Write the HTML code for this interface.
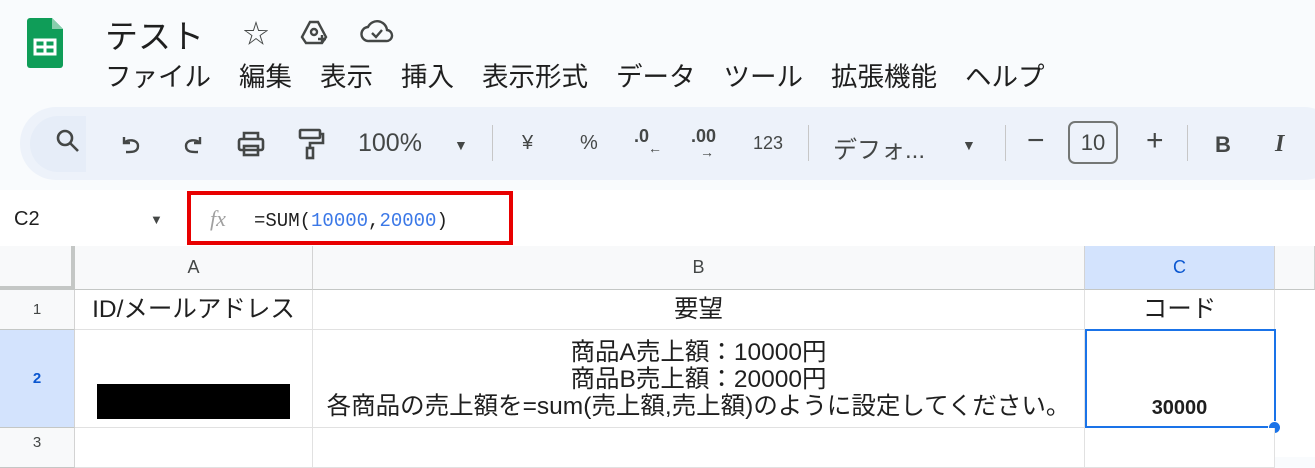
<!DOCTYPE html>
<html><head><meta charset="utf-8"><style>
*{margin:0;padding:0;box-sizing:border-box}
body{width:1315px;height:457px;overflow:hidden;background:#f9fbfd;font-family:"Liberation Sans","Noto Sans CJK JP",sans-serif;color:#444746;position:relative}
.a{position:absolute;white-space:nowrap}
.menu span{margin-right:28px}
.tb{position:absolute;left:20px;top:107px;width:1320px;height:73px;background:#edf2fa;border-radius:36px}
.t{position:absolute;top:128px;font-size:22px;color:#444746}
.sep{position:absolute;top:125px;width:1px;height:36px;background:#c7c7c7}
.grid{position:absolute;left:0;top:246px;width:1315px;height:211px;background:#fff}
.h{position:absolute;background:#f8f9fa;border-right:1px solid #d3d3d3;border-bottom:1px solid #c4c7c5;font-size:18px;color:#444746;display:flex;align-items:center;justify-content:center}
.c{position:absolute;background:#fff;border-right:1px solid #e1e1e1;border-bottom:1px solid #e1e1e1;font-size:24.5px;color:#1f1f1f;text-align:center}
</style></head><body>
<svg class="a" style="left:27px;top:18px" width="36" height="50" viewBox="0 0 36 50"><path d="M3 0h22l11 11v36a3 3 0 0 1-3 3H3a3 3 0 0 1-3-3V3a3 3 0 0 1 3-3z" fill="#0f9d58"/><path d="M25 0v11h11z" fill="#87ceac"/><rect x="8" y="22" width="20" height="14" fill="none" stroke="#fff" stroke-width="3"/><path d="M8 29h20M18 22v14" stroke="#fff" stroke-width="3"/></svg>
<div class="a" style="left:105px;top:10px;font-size:33px;color:#1f1f1f">テスト</div>
<div class="a" style="left:243px;top:14px;font-size:26px">☆</div>
<svg class="a" style="left:298px;top:17px" width="32" height="28" viewBox="0 0 32 28" fill="none" stroke="#444746" stroke-width="2.4"><path d="M4 20L12 5h8l8 15-4 6H8z"/><circle cx="16" cy="15" r="3"/><path d="M24 18v8M20 22h8"/></svg>
<svg class="a" style="left:360px;top:18px" width="34" height="26" viewBox="0 0 34 26" fill="none" stroke="#444746" stroke-width="2.4"><path d="M9 23a7 7 0 0 1-1-14 10 10 0 0 1 19 3 5.5 5.5 0 0 1-1 11z"/><path d="M12 15l4 4 6-7"/></svg>
<div class="a menu" style="left:105px;top:55px;font-size:26.5px;color:#1f1f1f"><span>ファイル</span><span>編集</span><span>表示</span><span>挿入</span><span>表示形式</span><span>データ</span><span>ツール</span><span>拡張機能</span><span>ヘルプ</span></div>
<div class="tb"></div>
<div class="a" style="left:30px;top:116px;width:56px;height:56px;border-radius:28px 0 0 28px;background:#e6edf8"></div>
<svg class="a" style="left:55px;top:128px" width="26" height="26" viewBox="0 0 26 26" fill="none" stroke="#444746" stroke-width="2.6"><circle cx="10" cy="10" r="7"/><path d="M15 15l8 8"/></svg>
<svg class="a" style="left:120px;top:133px" width="24" height="24" viewBox="0 0 24 24" fill="none" stroke="#444746" stroke-width="2.4"><path d="M4 4v6h6"/><path d="M4 10c3-4 14-4 14 3s-8 6-12 6"/></svg>
<svg class="a" style="left:180px;top:133px" width="24" height="24" viewBox="0 0 24 24" fill="none" stroke="#444746" stroke-width="2.4"><path d="M20 4v6h-6"/><path d="M20 10c-3-4-14-4-14 3s8 6 12 6"/></svg>
<svg class="a" style="left:236px;top:130px" width="30" height="28" viewBox="0 0 30 28" fill="none" stroke="#444746" stroke-width="2.6"><path d="M8 9V3h14v6"/><rect x="3" y="9" width="24" height="11" rx="2"/><rect x="8" y="16" width="14" height="9"/></svg>
<svg class="a" style="left:297px;top:128px" width="28" height="32" viewBox="0 0 28 32" fill="none" stroke="#444746" stroke-width="2.6"><rect x="3" y="2" width="20" height="8" rx="1"/><path d="M23 6h3v9H13v5"/><rect x="10" y="20" width="6" height="10"/></svg>
<div class="t" style="left:358px;font-size:25px;top:129px">100%</div>
<div class="t" style="left:454px;font-size:14px;top:137px">▼</div>
<div class="sep" style="left:492px"></div>
<div class="t" style="left:522px;font-size:20px;top:132px">¥</div>
<div class="t" style="left:580px;font-size:20px;top:132px">%</div>
<div class="t" style="left:634px;font-size:18px;top:126px;font-weight:bold">.0</div>
<div class="t" style="left:648px;font-size:14px;top:140px">←</div>
<div class="t" style="left:691px;font-size:18px;top:126px;font-weight:bold">.00</div>
<div class="t" style="left:700px;font-size:14px;top:144px">→</div>
<div class="t" style="left:753px;font-size:18px;top:133px">123</div>
<div class="sep" style="left:808px"></div>
<div class="t" style="left:833px;top:130px;font-size:24px">デフォ...</div>
<div class="t" style="left:962px;font-size:14px;top:137px">▼</div>
<div class="sep" style="left:1005px"></div>
<div class="t" style="left:1027px;top:124px;font-size:30px">−</div>
<div class="a" style="left:1068px;top:121px;width:50px;height:43px;border:2px solid #747775;border-radius:7px;font-size:22px;text-align:center;line-height:39px;color:#444746">10</div>
<div class="t" style="left:1146px;top:124px;font-size:30px">+</div>
<div class="sep" style="left:1187px"></div>
<div class="t" style="left:1215px;font-weight:bold;font-size:22px;top:132px">B</div>
<div class="t" style="left:1275px;font-style:italic;font-size:24px;font-family:'Liberation Serif',serif;font-weight:bold;top:131px">I</div>
<div class="a" style="left:0;top:190px;width:1315px;height:56px;background:#fff"></div>
<div class="a" style="left:14px;top:208px;font-size:20px;color:#1f1f1f">C2</div>
<div class="a" style="left:150px;top:212px;font-size:13px">▼</div>
<div class="a" style="left:187px;top:191px;width:326px;height:54px;border:4px solid #e80000"></div>
<div class="a" style="left:210px;top:206px;font-size:22px;color:#a0a0a0;font-style:italic;font-family:'Liberation Serif',serif">fx</div>
<div class="a" style="left:254px;top:210px;font-size:19px;font-family:'Liberation Mono',monospace;color:#1f1f1f">=SUM(<span style="color:#3b78e7">10000</span>,<span style="color:#3b78e7">20000</span>)</div>
<div class="grid"></div>
<div class="h" style="left:0;top:246px;width:75px;height:44px;border-right:4px solid #c4c7c5;border-bottom:4px solid #c4c7c5"></div>
<div class="h" style="left:75px;top:246px;width:238px;height:44px">A</div>
<div class="h" style="left:313px;top:246px;width:772px;height:44px">B</div>
<div class="h" style="left:1085px;top:246px;width:190px;height:44px;background:#d3e3fd;color:#0b57d0">C</div>
<div class="h" style="left:1275px;top:246px;width:40px;height:44px"></div>
<div class="h" style="left:0;top:290px;width:75px;height:40px;font-size:15px">1</div>
<div class="h" style="left:0;top:330px;width:75px;height:98px;font-size:15px;background:#d3e3fd;color:#0b57d0;font-weight:bold">2</div>
<div class="h" style="left:0;top:428px;width:75px;height:40px;font-size:15px;align-items:flex-start;padding-top:6px">3</div>
<div class="c" style="left:75px;top:290px;width:238px;height:40px;line-height:40px">ID/メールアドレス</div>
<div class="c" style="left:313px;top:290px;width:772px;height:40px;line-height:40px">要望</div>
<div class="c" style="left:1085px;top:290px;width:190px;height:40px;line-height:40px">コード</div>
<div class="c" style="left:75px;top:330px;width:238px;height:98px"></div>
<div class="a" style="left:97px;top:384px;width:193px;height:35px;background:#000"></div>
<div class="c" style="left:313px;top:330px;width:772px;height:98px;line-height:27px;padding-top:9px">商品A売上額：10000円<br>商品B売上額：20000円<br>各商品の売上額を=sum(売上額,売上額)のように設定してください。</div>
<div class="c" style="left:1085px;top:330px;width:190px;height:98px;font-weight:bold;font-size:20px;padding-top:67px">30000</div>
<div class="a" style="left:1085px;top:329px;width:191px;height:99px;border:2px solid #1a73e8"></div>
<div class="a" style="left:1268px;top:421px;width:13px;height:13px;border-radius:50%;background:#1a73e8;border:1px solid #fff"></div>
<div class="c" style="left:75px;top:428px;width:238px;height:40px"></div>
<div class="c" style="left:313px;top:428px;width:772px;height:40px"></div>
<div class="c" style="left:1085px;top:428px;width:190px;height:40px"></div>
</body></html>
